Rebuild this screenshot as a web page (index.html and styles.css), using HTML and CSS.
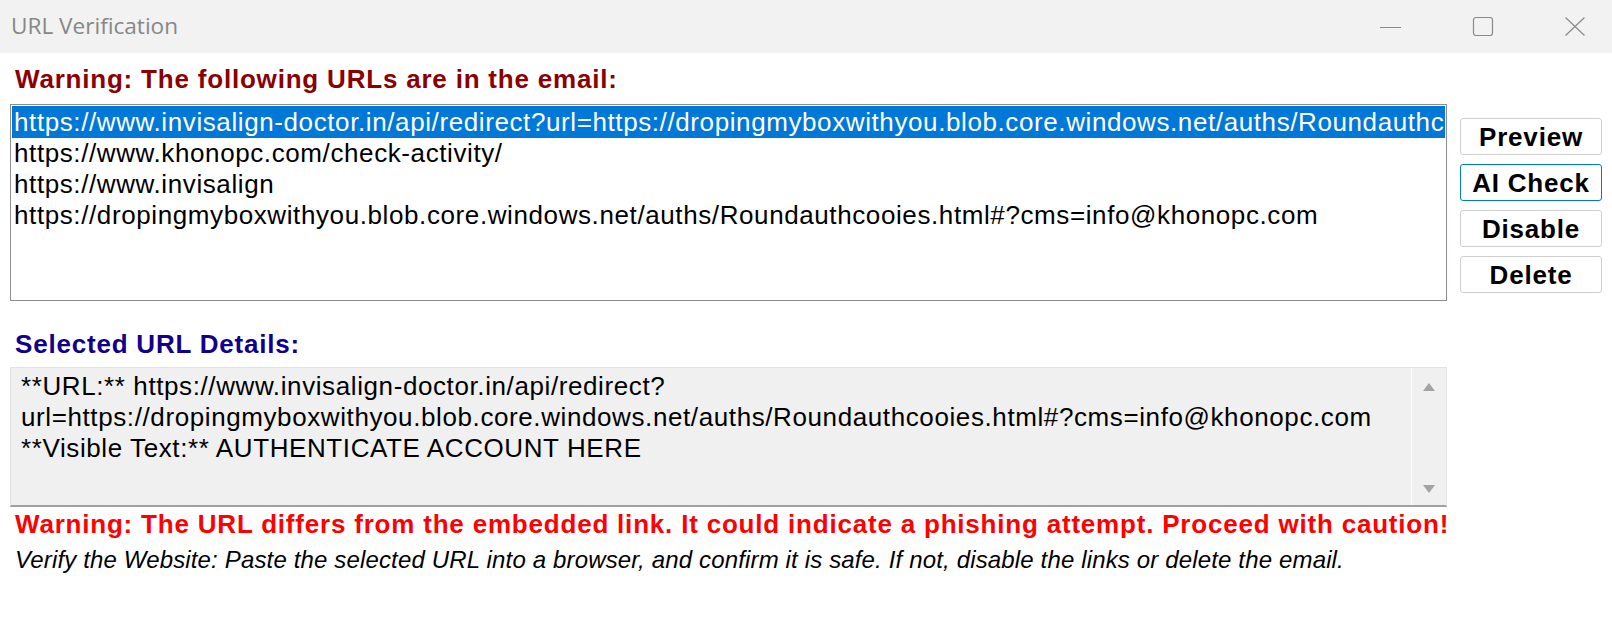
FILE: index.html
```html
<!DOCTYPE html>
<html>
<head>
<meta charset="utf-8">
<title>URL Verification</title>
<link rel="stylesheet" href="styles.css">
</head>
<body>
<div class="window">
  <div class="titlebar">
    <span class="title">URL Verification</span>
    <div class="controls">
      <span class="ctl"><svg width="22" height="22" viewBox="0 0 22 22"><line x1="0" y1="11.5" x2="21" y2="11.5" stroke="#8a8a8a" stroke-width="1"/></svg></span>
      <span class="ctl"><svg width="22" height="22" viewBox="0 0 22 22"><rect x="1.5" y="1.5" width="19" height="18" rx="2.5" fill="none" stroke="#8a8a8a" stroke-width="1.2"/></svg></span>
      <span class="ctl"><svg width="22" height="22" viewBox="0 0 22 22"><path d="M1.5 1.5 L20.5 19.5 M20.5 1.5 L1.5 19.5" stroke="#8a8a8a" stroke-width="1.2" fill="none"/></svg></span>
    </div>
  </div>
  <div class="content">
    <div class="warn-head">Warning: The following URLs are in the email:</div>
    <div class="main-row">
      <div class="listbox">
        <div class="row selected"><span class="clip">https://www.invisalign-doctor.in/api/redirect?url=https://dropingmyboxwithyou.blob.core.windows.net/auths/Roundauthcooies.html#?cms=info@khonopc.com</span></div>
        <div class="row">https://www.khonopc.com/check-activity/</div>
        <div class="row">https://www.invisalign</div>
        <div class="row">https://dropingmyboxwithyou.blob.core.windows.net/auths/Roundauthcooies.html#?cms=info@khonopc.com</div>
      </div>
      <div class="buttons">
        <button class="btn">Preview</button>
        <button class="btn focused">AI Check</button>
        <button class="btn">Disable</button>
        <button class="btn">Delete</button>
      </div>
    </div>
    <div class="details-head">Selected URL Details:</div>
    <div class="details">
      <div class="details-text">**URL:** https://www.invisalign-doctor.in/api/redirect?<br>url=https://dropingmyboxwithyou.blob.core.windows.net/auths/Roundauthcooies.html#?cms=info@khonopc.com<br>**Visible Text:** AUTHENTICATE ACCOUNT HERE</div>
      <div class="scrollbar">
        <svg width="12" height="8" viewBox="0 0 12 8"><polygon points="6,0 12,8 0,8" fill="#a3a3a3"/></svg>
        <svg width="12" height="8" viewBox="0 0 12 8"><polygon points="0,0 12,0 6,8" fill="#a3a3a3"/></svg>
      </div>
    </div>
    <div class="red-warn">Warning: The URL differs from the embedded link. It could indicate a phishing attempt. Proceed with caution!</div>
    <div class="hint">Verify the Website: Paste the selected URL into a browser, and confirm it is safe. If not, disable the links or delete the email.</div>
  </div>
</div>
</body>
</html>
```

FILE: styles.css
```css
html, body {
  margin: 0;
  padding: 0;
  background: #ffffff;
}

.window {
  width: 1612px;
  height: 618px;
  overflow: hidden;
  font-family: "Liberation Sans", Arial, sans-serif;
}

.titlebar {
  height: 53px;
  background: #f2f2f2;
  display: flex;
  align-items: center;
  justify-content: space-between;
  padding-left: 11px;
}

.title {
  font-family: "Open Sans", "Noto Sans", sans-serif;
  font-size: 22.6px;
  color: #878787;
  margin-top: -2px;
}

.controls {
  display: flex;
  align-items: center;
  gap: 70px;
  padding-right: 26px;
}

.ctl {
  display: flex;
  width: 22px;
  height: 22px;
}

.content {
  padding: 0 10px;
}

.warn-head,
.details-head,
.red-warn {
  font-weight: bold;
  font-size: 26px;
  letter-spacing: 0.8px;
  line-height: 28px;
  padding-left: 5px;
}

.warn-head {
  color: #8b0000;
  margin-top: 12px;
}

.main-row {
  display: flex;
  gap: 13px;
  margin-top: 11px;
}

.listbox {
  flex: 1;
  min-width: 0;
  height: 193px;
  border: 1px solid #8c8c94;
  padding: 1px;
  overflow: hidden;
  font-size: 26px;
  letter-spacing: 0.6px;
}

.row {
  white-space: nowrap;
  line-height: 31px;
  padding-left: 2px;
  color: #000;
}

.row.selected {
  background: #0078d7;
  color: #ffffff;
  height: 32px;
  line-height: 32px;
  overflow: hidden;
}

.clip {
  display: block;
  overflow: hidden;
}

.buttons {
  display: flex;
  flex-direction: column;
  gap: 9px;
  margin-top: 14px;
  width: 142px;
}

.btn {
  height: 37px;
  background: #ffffff;
  border: 1px solid #cfcfcf;
  border-radius: 3px;
  font-family: "Liberation Sans", Arial, sans-serif;
  font-weight: bold;
  font-size: 26px;
  letter-spacing: 0.8px;
  color: #000;
  padding: 0;
  line-height: 1;
}

.btn.focused {
  border-color: #0078d7;
}

.details-head {
  color: #12008a;
  margin-top: 29px;
}

.details {
  margin-top: 9px;
  width: 1437px;
  height: 140px;
  box-sizing: border-box;
  background: #f0f0f0;
  border-top: 1px solid #e3e3e3;
  border-left: 1px solid #e3e3e3;
  border-right: 1px solid #e3e3e3;
  border-bottom: 2px solid #a0a0a0;
  display: flex;
}

.details-text {
  flex: 1;
  font-size: 26px;
  letter-spacing: 0.6px;
  line-height: 31px;
  padding: 3px 0 0 10px;
  color: #000;
  white-space: nowrap;
  overflow: hidden;
}

.scrollbar {
  width: 34px;
  border-left: 1px solid #ffffff;
  display: flex;
  flex-direction: column;
  align-items: center;
  justify-content: space-between;
  padding: 15px 0 12px;
}

.red-warn {
  color: #ff0000;
  margin-top: 3px;
}

.hint {
  font-style: italic;
  font-size: 24px;
  letter-spacing: 0.15px;
  color: #000;
  padding-left: 5px;
  margin-top: 9px;
  line-height: 26px;
}
```
